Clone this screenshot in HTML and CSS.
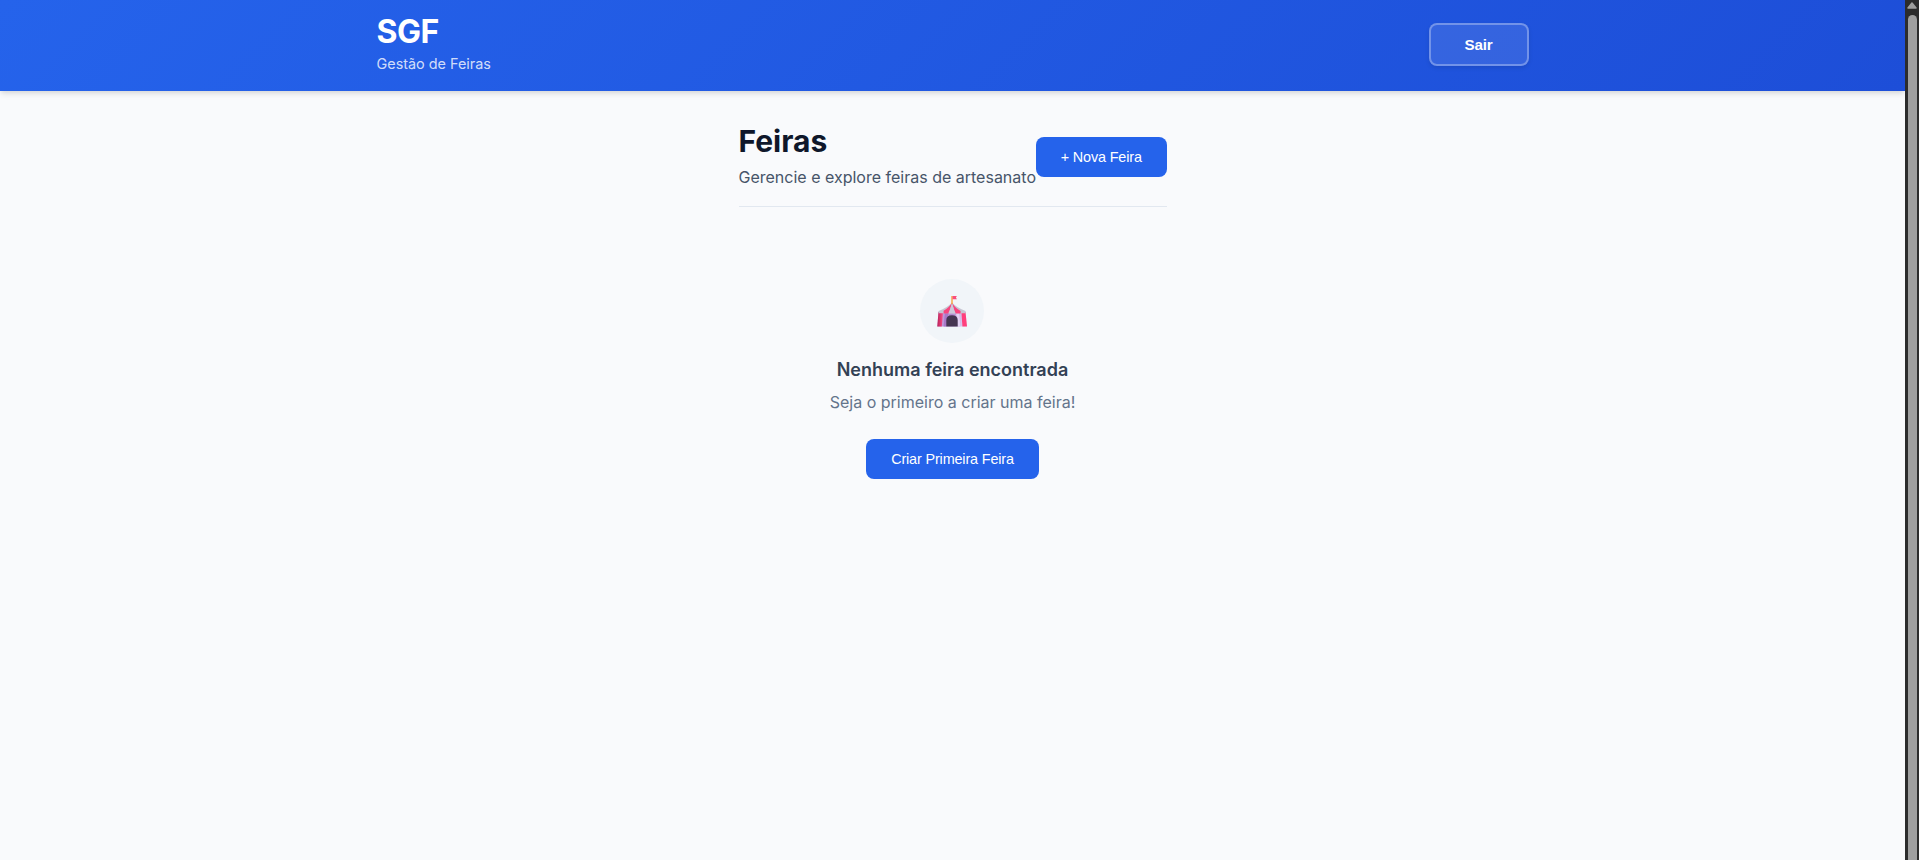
FILE: index.html
```html
<!DOCTYPE html>
<html lang="pt-BR">
<head>
<meta charset="utf-8">
<title>SGF</title>
<link rel="stylesheet" href="styles.css">
</head>
<body>
<div class="page">
  <header class="header">
    <div class="header-inner">
      <div class="brand">
        <h1 class="brand-name"><span>SGF</span></h1>
        <p class="brand-sub"><span>Gestão de Feiras</span></p>
      </div>
      <button class="btn-exit">Sair</button>
    </div>
  </header>
  <main class="main">
    <div class="page-head">
      <div>
        <h2 class="title"><span>Feiras</span></h2>
        <p class="subtitle"><span>Gerencie e explore feiras de artesanato</span></p>
      </div>
      <button class="btn">+ Nova Feira</button>
    </div>
    <section class="empty">
      <div class="empty-icon">
        <svg width="30" height="32" viewBox="0 0 30 32">
          <defs>
            <linearGradient id="wall" x1="0" x2="1"><stop offset="0" stop-color="#c9a0e0"/><stop offset=".5" stop-color="#b08ad0"/><stop offset="1" stop-color="#efe4fa"/></linearGradient>
            <linearGradient id="red" x1="0" x2="1"><stop offset="0" stop-color="#b82258"/><stop offset="1" stop-color="#ff4d86"/></linearGradient>
          </defs>
          <path d="M1.5 16.5H28.5L30 31.5H.3Z" fill="url(#wall)"/>
          <path d="M1.5 17H6L4.8 31.5H.3Z" fill="url(#red)"/>
          <path d="M24.4 17h4.1L30 31.5h-4.6Z" fill="#ff3f7c"/>
          <path d="M8 17h3.5L9.4 31.5H6.6Z" fill="#a878c8"/>
          <path d="M19 17h3l1.4 14.5h-3Z" fill="#e4d3f4"/>
          <path d="M15 7.5Q10 13 1.6 16v2.2h27V16Q20 13 15 7.5Z" fill="#c6c5d2"/>
          <path d="M15 7.5Q12.8 12 6.6 15.8V18.5h4.6Q13.5 14 15 7.5Q16.5 14 18.8 18.5h4.8V16Q17.5 12.5 15 7.5Z" fill="#f8447f"/>
          <path d="M14.6 9.5L12 18.5h6L15.5 9.5Z" fill="#cdc8da"/>
          <path d="M9.3 31.5V25Q9.3 20.2 15 20.2T20.7 25V31.5Z" fill="#463652"/>
          <path d="M14.3 1h1.4v8h-1.4Z" fill="#f8a43c"/>
          <path d="M15.5 1h4.4l-1 1.5 1 1.7h-4.4Z" fill="#f94e7d"/>
        </svg>
      </div>
      <h3 class="empty-title"><span>Nenhuma feira encontrada</span></h3>
      <p class="empty-text"><span>Seja o primeiro a criar uma feira!</span></p>
      <button class="btn btn-create">Criar Primeira Feira</button>
    </section>
  </main>
</div>
<div class="scrollbar">
  <svg class="arrow" width="10" height="7" viewBox="0 0 10 7"><path d="M5 1L9 6H1Z" fill="#9f9f9f" stroke="#9f9f9f" stroke-width="1.5" stroke-linejoin="round"/></svg>
  <div class="thumb"></div>
</div>
</body>
</html>
```
FILE: styles.css
```css
* { box-sizing: border-box; margin: 0; padding: 0; }
body {
  display: flex;
  height: 860px;
  overflow: hidden;
  background: #f9fafc;
  font-family: Inter, "Liberation Sans", sans-serif;
}
.page { flex: 1; }
.header {
  height: 91px;
  background: linear-gradient(135deg, #2563eb 0%, #1d4ed8 100%);
  box-shadow: 0 4px 6px -1px rgba(0, 0, 0, .1), 0 2px 4px -1px rgba(0, 0, 0, .06);
}
.header-inner {
  display: flex;
  align-items: center;
  justify-content: space-between;
  width: 1200px;
  height: 89px;
  margin: 0 auto;
  padding: 0 24px;
}
.brand-name {
  color: #fff;
  font-size: 32px;
  line-height: 38px;
  font-weight: 700;
  letter-spacing: -.5px;
}
.brand-sub {
  margin: 2px 0 2px;
  color: rgba(255, 255, 255, .8);
  font-size: 14.4px;
  line-height: 22px;
}
.btn-exit {
  width: 100px;
  height: 43px;
  border: 2px solid rgba(255, 255, 255, .3);
  border-radius: 8px;
  background: rgba(255, 255, 255, .1);
  box-shadow: 0 2px 4px rgba(0, 0, 0, .1);
  color: #fff;
  font: 700 15.2px "Liberation Sans", Arial, sans-serif;
  letter-spacing: -.2px;
}
.main {
  width: 428px;
  margin: 0 auto;
  padding-top: 32px;
}
.page-head {
  display: flex;
  align-items: center;
  justify-content: space-between;
  height: 84px;
  padding-bottom: 16px;
  border-bottom: 1px solid #e2e8f0;
  white-space: nowrap;
}
.title {
  color: #0f172a;
  font-size: 30px;
  line-height: 37px;
  font-weight: 700;
}
.subtitle {
  margin-top: 4px;
  color: #475569;
  font-size: 16px;
  line-height: 26px;
}
.btn {
  width: 131px;
  height: 40px;
  border: 0;
  border-radius: 8px;
  background: #2563eb;
  color: #fff;
  font: 400 14.4px "Liberation Sans", Arial, sans-serif;
  letter-spacing: -.14px;
}
.btn-create { width: 173px; }
.empty {
  display: flex;
  flex-direction: column;
  align-items: center;
  padding-top: 72px;
}
.empty-icon {
  display: flex;
  align-items: flex-start;
  justify-content: center;
  width: 64px;
  height: 64px;
  margin-right: 1px;
  padding-top: 16px;
  border-radius: 50%;
  background: #f1f5f9;
}
.empty-title {
  margin-top: 12px;
  color: #334155;
  font-size: 18px;
  line-height: 29px;
  font-weight: 600;
}
.empty-text {
  margin: 6px 0 25px;
  color: #64748b;
  font-size: 16px;
  line-height: 24px;
}
.scrollbar {
  display: flex;
  flex-direction: column;
  align-items: center;
  width: 14px;
  height: 860px;
  background: #2c2c2c;
}
.arrow { margin: 2px 0 6px; }
.thumb {
  flex: 1;
  width: 9px;
  border-radius: 5px 5px 0 0;
  background: #9f9f9f;
}
```
